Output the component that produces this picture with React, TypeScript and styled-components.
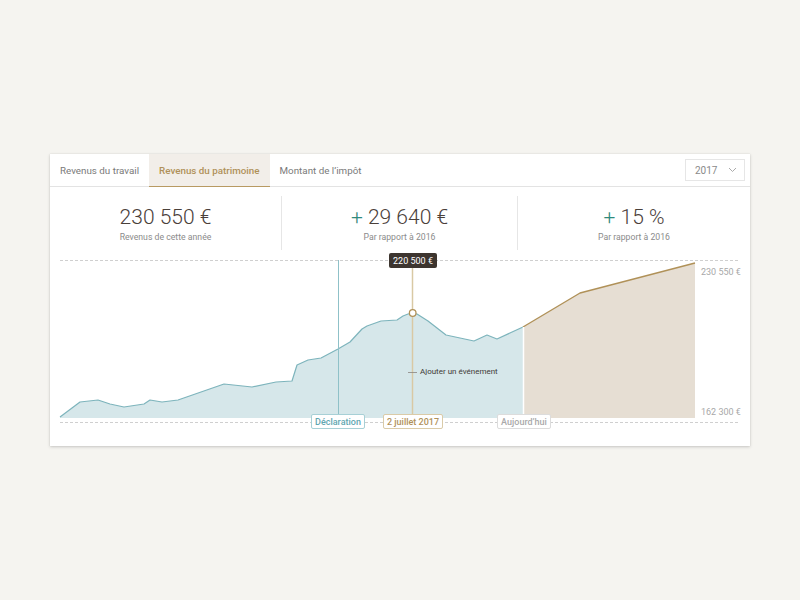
import React from "react";
import styled, { createGlobalStyle } from "styled-components";

const Global = createGlobalStyle`
  html, body { margin: 0; padding: 0; }
  body {
    background: #f5f4f0;
    font-family: Roboto, "Liberation Sans", Arial, sans-serif;
    -webkit-font-smoothing: antialiased;
  }
`;

const Page = styled.div`
  width: 800px;
  height: 600px;
  display: flex;
  align-items: center;
  justify-content: center;
`;

const Card = styled.div`
  width: 700px;
  height: 292px;
  background: #ffffff;
  box-shadow: 0 1px 3px rgba(0, 0, 0, 0.18), 0 0 1px rgba(0, 0, 0, 0.12);
  display: flex;
  flex-direction: column;
`;

const TabBar = styled.div`
  height: 32px;
  display: flex;
  align-items: stretch;
  border-bottom: 1px solid #e3e3e3;
`;

const Tab = styled.div<{ $active?: boolean }>`
  display: flex;
  align-items: center;
  padding: 0 10px;
  font-size: 9.8px;
  color: ${(p) => (p.$active ? "#b0915a" : "#7a7a7a")};
  font-weight: ${(p) => (p.$active ? 500 : 400)};
  background: ${(p) => (p.$active ? "#f2eee9" : "transparent")};
  box-shadow: ${(p) => (p.$active ? "inset 0 -1px 0 #b89a62" : "none")};
  margin-bottom: -1px;
`;

const Spacer = styled.div`
  flex: 1;
`;

const Select = styled.div`
  align-self: center;
  margin-right: 5px;
  width: 60px;
  height: 22px;
  box-sizing: border-box;
  border: 1px solid #e6e6e6;
  display: flex;
  align-items: center;
  justify-content: space-between;
  padding: 0 7px 0 9px;
  font-size: 10px;
  color: #8a8a8a;
`;

const Stats = styled.div`
  display: grid;
  grid-template-columns: 231px 236px 1fr;
  padding-top: 9px;
  height: 54px;
`;

const Stat = styled.div<{ $divider?: boolean }>`
  display: flex;
  flex-direction: column;
  align-items: center;
  border-left: ${(p) => (p.$divider ? "1px solid #e6e6e6" : "none")};
  padding-top: 10px;
`;

const Value = styled.div`
  font-size: 21px;
  font-weight: 300;
  color: #4a403a;
  line-height: 22px;
`;

const Plus = styled.span`
  color: #2f8a7c;
`;

const Label = styled.div`
  margin-top: 4px;
  font-size: 8.7px;
  color: #8b8b8b;
`;

const Chart = styled.div`
  position: relative;
  flex: 1;
`;

const Tooltip = styled.div`
  position: absolute;
  left: 339px;
  top: 3px;
  width: 48px;
  height: 15px;
  background: #3d352f;
  color: #ffffff;
  font-size: 9px;
  border-radius: 2px;
  display: flex;
  align-items: center;
  justify-content: center;
`;

const Marker = styled.div<{ $color: string; $border: string; $left: number; $width: number }>`
  position: absolute;
  top: 164px;
  left: ${(p) => p.$left}px;
  width: ${(p) => p.$width}px;
  height: 15px;
  box-sizing: border-box;
  border: 1px solid ${(p) => p.$border};
  border-radius: 2px;
  background: #ffffff;
  color: ${(p) => p.$color};
  font-size: 9px;
  font-weight: 500;
  display: flex;
  align-items: center;
  justify-content: center;
`;

const AddEvent = styled.div`
  position: absolute;
  left: 370px;
  top: 117px;
  font-size: 8px;
  color: #3f3a36;
`;

const tealPts: [number, number][] = [
  [10, 167], [30, 152], [48, 150], [60, 154], [74, 157], [94, 154], [100, 150],
  [112, 152], [128, 150], [174, 134], [202, 137], [226, 132], [242, 131],
  [247, 115], [258, 110], [271, 108], [288, 99], [300, 92], [312, 79], [317, 76],
  [331, 71], [347, 70], [353, 66], [358, 64], [362.7, 63], [367, 64], [378, 71],
  [396, 85], [424, 91], [437, 85], [447, 89], [473, 77],
];
const goldPts: [number, number][] = [[473, 77], [530, 43], [645, 13]];

const line = (pts: [number, number][]) => pts.map(([x, y], i) => `${i ? "L" : "M"}${x} ${y}`).join(" ");

export default function App() {
  const base = 168;
  const tealArea = `${line(tealPts)} L473 ${base} L10 ${base} Z`;
  const goldArea = `${line(goldPts)} L645 ${base} L473 ${base} Z`;
  return (
    <>
      <Global />
      <Page>
        <Card>
          <TabBar>
            <Tab>Revenus du travail</Tab>
            <Tab $active>Revenus du patrimoine</Tab>
            <Tab>Montant de l’impôt</Tab>
            <Spacer />
            <Select>
              <span>2017</span>
              <svg width="9" height="6" viewBox="0 0 9 6">
                <path d="M1 1 L4.5 4.5 L8 1" fill="none" stroke="#aaa" strokeWidth="1" />
              </svg>
            </Select>
          </TabBar>
          <Stats>
            <Stat>
              <Value>230 550 €</Value>
              <Label>Revenus de cette année</Label>
            </Stat>
            <Stat $divider>
              <Value><Plus>+</Plus> 29 640 €</Value>
              <Label>Par rapport à 2016</Label>
            </Stat>
            <Stat $divider>
              <Value><Plus>+</Plus> 15 %</Value>
              <Label>Par rapport à 2016</Label>
            </Stat>
          </Stats>
          <Chart>
            <svg width="700" height="196" viewBox="0 0 700 196" style={{ display: "block" }}>
              <line x1="10" y1="10.5" x2="690" y2="10.5" stroke="#cfcfcf" strokeDasharray="3 2" />
              <line x1="10" y1="172.5" x2="690" y2="172.5" stroke="#cfcfcf" strokeDasharray="3 2" />
              <path d={tealArea} fill="#d6e7ea" />
              <path d={goldArea} fill="#e6ded3" />
              <path d={line(tealPts)} fill="none" stroke="#7db4bc" strokeWidth="1.2" strokeLinejoin="round" />
              <path d={line(goldPts)} fill="none" stroke="#b09158" strokeWidth="1.4" strokeLinejoin="round" />
              <line x1="473.5" y1="77" x2="473.5" y2="168" stroke="#ffffff" strokeWidth="1.5" />
              <line x1="288.5" y1="10" x2="288.5" y2="165" stroke="#8fc1c8" strokeWidth="1" />
              <line x1="362.5" y1="18" x2="362.5" y2="165" stroke="#d9c9a4" strokeWidth="1.5" />
              <line x1="358" y1="122.5" x2="367" y2="122.5" stroke="#8a8580" strokeWidth="0.8" />
              <circle cx="362.7" cy="63" r="3.3" fill="#ffffff" stroke="#b09158" strokeWidth="1.3" />
              <text x="651" y="25" fontSize="9" fill="#a8a8a8" fontFamily="Roboto, sans-serif">230 550 €</text>
              <text x="651" y="165" fontSize="9" fill="#a8a8a8" fontFamily="Roboto, sans-serif">162 300 €</text>
            </svg>
            <Tooltip>220 500 €</Tooltip>
            <AddEvent>Ajouter un événement</AddEvent>
            <Marker $left={261} $width={54} $color="#62a6b0" $border="#a7d0d6">Déclaration</Marker>
            <Marker $left={333} $width={60} $color="#b0915a" $border="#dacba8">2 juillet 2017</Marker>
            <Marker $left={447} $width={54} $color="#a9a9a9" $border="#dcdcdc">Aujourd’hui</Marker>
          </Chart>
        </Card>
      </Page>
    </>
  );
}
